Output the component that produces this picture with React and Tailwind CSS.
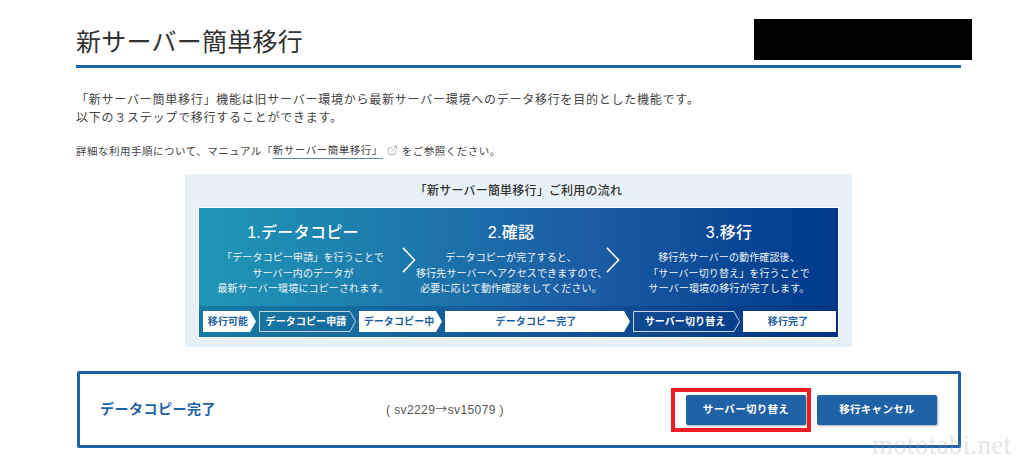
import React from 'react';
import { ExternalLink } from 'lucide-react';

const jp = 'font-["Liberation_Sans","Noto_Sans_CJK_JP",sans-serif]';

// one chevron between the steps
const Chevron = () => (
  <div className="w-[14px] flex items-center justify-center pt-[6px]">
    <svg width="15" height="28" viewBox="0 0 15 28" fill="none">
      <path d="M1 1 L13.5 14 L1 27" stroke="#fff" strokeWidth="1.6" />
    </svg>
  </div>
);

const Step = ({ title, lines, className }) => (
  <div className={`text-center text-white whitespace-nowrap ${className}`}>
    <div className="text-[16px] leading-[20px] font-medium tracking-[0.3px] mt-[15px] mb-[7px]">{title}</div>
    {lines.map((l) => (
      <div key={l} className="text-[10px] leading-[15.5px] tracking-[0.13px] text-[#eef4fa]">{l}</div>
    ))}
  </div>
);

// status tag: white arrow, outlined arrow or plain white box
const Tag = ({ width, kind, children }) => {
  const h = 21;
  const tip = width - 6;
  const outlined = kind === 'outline';
  return (
    <div className="relative flex items-center justify-center h-[21px] shrink-0" style={{ width }}>
      <svg className="absolute inset-0" width={width} height={h} viewBox={`0 0 ${width} ${h}`}>
        {outlined ? (
          <path d={`M0.5 0.5 H${tip} L${width - 0.5} 10.5 L${tip} 20.5 H0.5 Z`} fill="none" stroke="#c4d6e8" strokeWidth="1" />
        ) : kind === 'box' ? (
          <rect width={width} height={h} fill="#fff" />
        ) : (
          <path d={`M0 0 H${tip} L${width} 10.5 L${tip} 21 H0 Z`} fill="#fff" />
        )}
      </svg>
      <span className={`relative text-[10px] font-bold tracking-[0.1px] pr-[3px] whitespace-nowrap ${outlined ? 'text-white' : 'text-[#1f5f9f]'}`}>
        {children}
      </span>
    </div>
  );
};

export default function App() {
  return (
    <div className={`relative w-[1024px] h-[465px] overflow-hidden bg-white text-[#444] ${jp}`}>
      {/* blacked out account name */}
      <div className="absolute left-[754px] top-[19px] w-[218px] h-[41px] bg-black" />

      <div className="ml-[77px] w-[884px] pt-[24px]">
        <h1 className="text-[25px] leading-[36px] tracking-[0.25px] text-[#333] -ml-[1px] pb-[5px] border-b-[3px] border-[#1f62a5]">
          新サーバー簡単移行
        </h1>

        <p className="mt-[23px] -ml-[1px] text-[12px] leading-[18px] tracking-[0.76px] whitespace-nowrap">
          「新サーバー簡単移行」機能は旧サーバー環境から最新サーバー環境へのデータ移行を目的とした機能です。
          <br />
          以下の３ステップで移行することができます。
        </p>

        <p className="mt-[15px] -ml-[1px] text-[10.5px] leading-[16px] tracking-[0.5px] whitespace-nowrap flex items-center">
          詳細な利用手順について、マニュアル「
          <span className="border-b border-[#5c84ad]">新サーバー簡単移行」</span>
          <ExternalLink className="w-[11px] h-[11px] mx-[4px] text-[#999]" strokeWidth={1.5} />
          をご参照ください。
        </p>

        {/* flow diagram */}
        <div className="mt-[15px] ml-[108px] w-[667px] h-[173px] bg-[#e9f1f8] pt-[7px] flex flex-col items-center">
          <div className="text-[12px] leading-[20px] font-medium text-[#333] tracking-[0.2px]">
            「新サーバー簡単移行」ご利用の流れ
          </div>
          <div className="mt-[6px] w-[641px] h-[131px] border border-white bg-linear-to-r from-[#2097b6] via-[#1c5da3] via-60% to-[#00388a] flex flex-col">
            <div className="flex h-[98px]">
              <Step
                className="w-[203px] pl-[5px]"
                title="1.データコピー"
                lines={['「データコピー申請」を行うことで', 'サーバー内のデータが', '最新サーバー環境にコピーされます。']}
              />
              <Chevron />
              <Step
                className="w-[190px]"
                title="2.確認"
                lines={['データコピーが完了すると、', '移行先サーバーへアクセスできますので、', '必要に応じて動作確認をしてください。']}
              />
              <Chevron />
              <Step
                className="flex-1"
                title="3.移行"
                lines={['移行先サーバーの動作確認後、', '「サーバー切り替え」を行うことで', 'サーバー環境の移行が完了します。']}
              />
            </div>
            <div className="flex-1 bg-[#00286a]/25 flex items-center gap-[3px] pl-[4px]">
              <Tag width={53}>移行可能</Tag>
              <Tag width={97} kind="outline">データコピー申請</Tag>
              <Tag width={83}>データコピー中</Tag>
              <Tag width={185}>データコピー完了</Tag>
              <Tag width={107} kind="outline">サーバー切り替え</Tag>
              <Tag width={93} kind="box">移行完了</Tag>
            </div>
          </div>
        </div>

        {/* current status card */}
        <div className="relative mt-[24px] h-[77px] border-[3px] border-[#1f62a5] rounded-[2px] flex items-center">
          <div className="ml-[20px] w-[286px] text-[14px] font-bold tracking-[0.5px] text-[#1f62a5]">データコピー完了</div>
          <div className="text-[12px] tracking-[0.4px] text-[#555] whitespace-nowrap">
            ( sv2229<span className="font-['Noto_Sans_CJK_JP',sans-serif]">→</span>sv15079 )
          </div>
          <div className="ml-auto mr-[21px] flex gap-[11px]">
            <button className="w-[120px] h-[30px] rounded-[2px] bg-[#1f62a5] text-white text-[10.5px] font-bold tracking-[0.3px] shadow-[1px_1px_2px_rgba(0,0,0,0.35)]">
              サーバー切り替え
            </button>
            <button className="w-[120px] h-[30px] rounded-[2px] bg-[#1f62a5] text-white text-[10.5px] font-bold tracking-[0.3px] shadow-[1px_1px_2px_rgba(0,0,0,0.35)]">
              移行キャンセル
            </button>
          </div>
          {/* red highlight round the switch button */}
          <div className="absolute left-[591px] top-[14px] w-[140px] h-[44px] border-[4px] border-[#ee1c25]" />
        </div>
      </div>

      {/* watermark */}
      <div className="absolute left-[872px] top-[431px] font-['Liberation_Serif',serif] text-[27px] leading-[28px] tracking-[0.3px] text-[#999]/25">
        mototabi.net
      </div>
    </div>
  );
}
